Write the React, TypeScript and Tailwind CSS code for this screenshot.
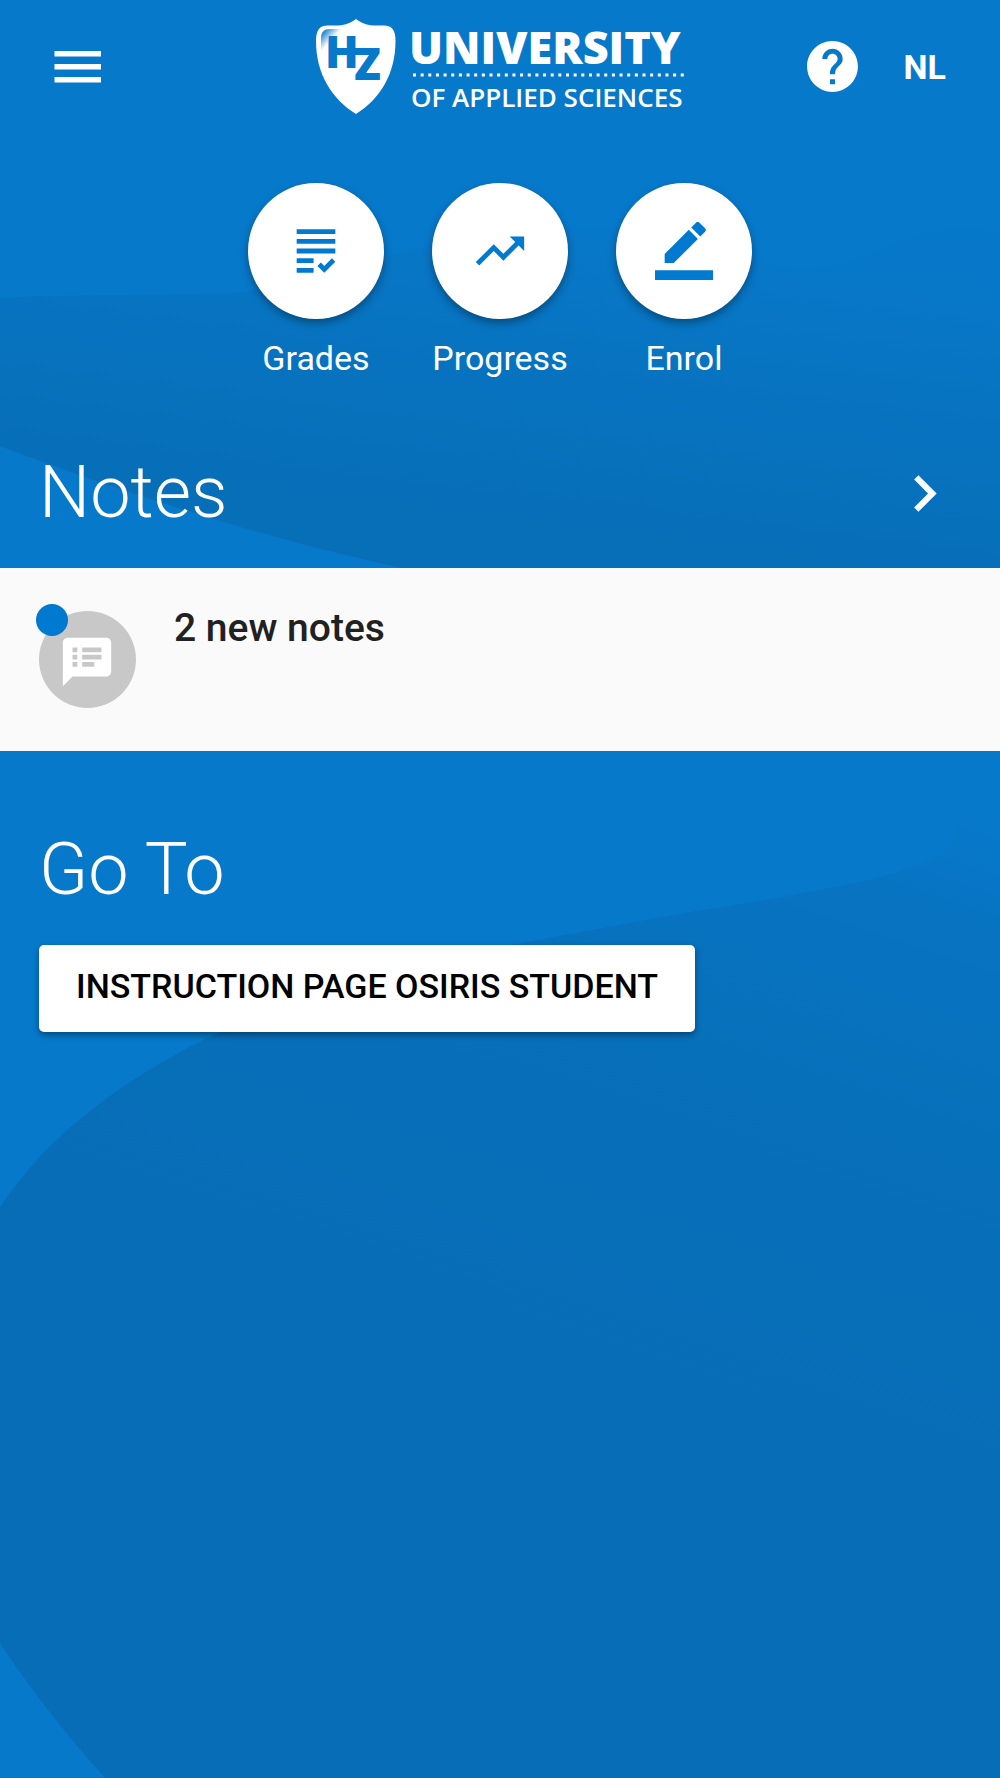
import { MdChevronRight, MdGrading, MdHelp, MdSpeakerNotes, MdTrendingUp } from "react-icons/md";

function MenuIcon() {
  return (
    <svg width="48" height="34" viewBox="0 0 48 34" fill="currentColor">
      <rect x="0.5" y="1" width="46.500" height="5.500" />
      <rect x="0.5" y="14" width="46.500" height="5.500" />
      <rect x="0.5" y="27" width="46.500" height="5.500" />
    </svg>
  );
}

function EnrolIcon() {
  return (
    <svg width="58" height="58" viewBox="0 0 24 24" fill="currentColor">
      <path d="M17.75 7L14 3.25l-10 10V17h3.75l10-10zm2.96-2.96a.996.996 0 000-1.41L18.37.29a.996.996 0 00-1.41 0L15 2.25 18.75 6l1.96-1.96z" />
      <path d="M0 20h24v4H0z" />
    </svg>
  );
}

function Logo() {
  return (
    <svg width="368" height="98" viewBox="316 18 368 98" overflow="visible" role="img" aria-label="HZ University of Applied Sciences">
      <defs>
        <linearGradient id="shine" x1="321" y1="29" x2="336" y2="43" gradientUnits="userSpaceOnUse">
          <stop offset="0" stopColor="#0779cb" />
          <stop offset="0.25" stopColor="#0779cb" stopOpacity="0.8" />
          <stop offset="0.75" stopColor="#0779cb" stopOpacity="0" />
        </linearGradient>
      </defs>
      <path
        d="M356 19c-7 5-13 6.500-20 6.500-4 0-8-.3-11 .2-6 1-9 5-9 15.300 0 33 16 58 40 73 24-15 39.500-40 39.500-73 0-10.300-3-14.300-9-15.300-3-.5-7-.2-11-.2-7 0-12.500-1.500-19.500-6.500z"
        fill="white"
      />
      <path d="M321 56V38c0-6 3-9 9-9h24l-12 7h-14v20l-4 8z" fill="url(#shine)" />
      <path d="M340 48h26v7h-26z" fill="#0779cb" />
      <text x="325" y="68" fontFamily="Open Sans" fontWeight="800" fontSize="44" fill="#0779cb">
        H<tspan x="354" y="80">Z</tspan>
      </text>
      <text x="409" y="64" fontFamily="Open Sans" fontWeight="800" fontSize="45" fill="white">UNIVERSITY</text>
      <path d="M413 75h271" stroke="white" strokeWidth="3" strokeDasharray="3 4.650" />
      <text x="411" y="107" fontFamily="Open Sans" fontWeight="600" fontSize="26" fill="white">OF APPLIED SCIENCES</text>
    </svg>
  );
}

const shortcuts = [
  { label: "Grades", icon: <MdGrading size={58} /> },
  { label: "Progress", icon: <MdTrendingUp size={58} /> },
  { label: "Enrol", icon: <EnrolIcon /> },
];

export default function App() {
  return (
    <div className="flex min-h-screen flex-col bg-[#0779cb] font-[Roboto,sans-serif] text-white">
      <section className="relative isolate">
        {/* Backdrop wave */}
        <svg className="absolute inset-0 -z-10 h-full w-full" viewBox="0 0 1000 568" preserveAspectRatio="none" aria-hidden="true">
          <defs>
            <linearGradient id="waveTop" x1="560" y1="220" x2="520" y2="540" gradientUnits="userSpaceOnUse">
              <stop offset="0" stopColor="#0778c9" />
              <stop offset="0.4" stopColor="#0774c1" />
              <stop offset="1" stopColor="#076eb8" />
            </linearGradient>
          </defs>
          <path
            d="M0 298C90 292 190 298 260 290C350 280 420 228 560 228C680 228 740 268 805 268C880 268 900 215 1000 232V568H402C270 540 120 492 0 446Z"
            fill="url(#waveTop)"
          />
        </svg>

        <header className="grid h-[133px] grid-cols-[1fr_auto_1fr] items-center px-[54px]">
          <button type="button" aria-label="Menu" className="justify-self-start">
            <MenuIcon />
          </button>
          <Logo />
          <div className="flex items-center gap-[41px] justify-self-end">
            <button type="button" aria-label="Help">
              <MdHelp size={61} />
            </button>
            <button type="button" className="text-[34px] leading-10 font-bold">NL</button>
          </div>
        </header>

        <nav className="flex justify-center gap-12 pt-[50px]">
          {shortcuts.map((item) => (
            <a key={item.label} href="#" className="flex w-34 flex-col items-center gap-[19px]">
              <span className="flex size-34 items-center justify-center rounded-full bg-white text-[#0079d0] shadow-[0_4px_8px_rgba(0,0,0,0.35)]">
                {item.icon}
              </span>
              <span className="text-[34px] leading-10">{item.label}</span>
            </a>
          ))}
        </nav>

        <div className="flex items-center justify-between px-[39px] pt-[69px] pb-[29px]">
          <h2 className="text-[72px] leading-[92px] font-light">Notes</h2>
          <button type="button" aria-label="All notes">
            <MdChevronRight size={73} />
          </button>
        </div>
      </section>

      <a href="#" className="flex gap-[38px] bg-[#fafafa] px-[39px] py-[43px] text-[#212121]">
        <span className="relative flex size-[97px] items-center justify-center rounded-full bg-[#c8c8c8] pt-1 pr-[2px] text-white">
          <MdSpeakerNotes size={58} />
          <span className="absolute -top-[7px] -left-[3px] size-8 rounded-full bg-[#0079d0]" />
        </span>
        <span className="text-[39px] leading-[34px] font-medium">2 new notes</span>
      </a>

      <section className="relative isolate flex-1 px-[39px] pt-[73px] pb-10">
        <svg className="absolute inset-0 -z-10 h-full w-full" viewBox="0 0 1000 1027" preserveAspectRatio="none" aria-hidden="true">
          <defs>
            <linearGradient id="waveBottom" x1="960" y1="60" x2="760" y2="660" gradientUnits="userSpaceOnUse">
              <stop offset="0" stopColor="#0779cb" />
              <stop offset="0.15" stopColor="#0774c2" />
              <stop offset="0.5" stopColor="#0770bb" />
              <stop offset="1" stopColor="#076db7" />
            </linearGradient>
          </defs>
          <path
            d="M1000 50L955 65C962 85 950 99 935 107C890 128 820 140 689 161L526 191C420 212 310 238 207 287C130 325 50 380 0 456V892C30 938 65 982 105 1027H1000Z"
            fill="url(#waveBottom)"
          />
        </svg>

        <h2 className="text-[72px] leading-[92px] font-light">Go To</h2>
        <button
          type="button"
          className="mt-[29px] h-[87px] rounded-[5px] bg-white px-[37px] pb-1 text-[34px] font-medium text-black shadow-[0_3px_6px_rgba(0,0,0,0.4)]"
        >
          INSTRUCTION PAGE OSIRIS STUDENT
        </button>
      </section>
    </div>
  );
}
